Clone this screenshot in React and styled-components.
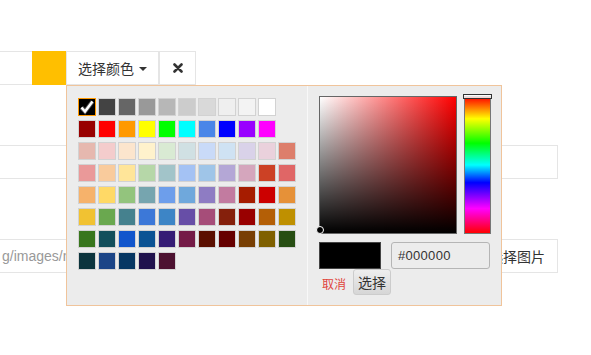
import React from 'react'
import styled, {createGlobalStyle} from 'styled-components'

const GlobalStyle = createGlobalStyle`
  html, body {
    margin: 0;
    padding: 0;
    background: #fff;
    font-family: "Liberation Sans", "Noto Sans CJK SC", sans-serif;
    color: #333;
  }
`

const palette = [
  ['#000000', '#434343', '#666666', '#999999', '#b7b7b7', '#cccccc', '#d9d9d9', '#efefef', '#f3f3f3', '#ffffff'],
  ['#980000', '#ff0000', '#ff9900', '#ffff00', '#00ff00', '#00ffff', '#4a86e8', '#0000ff', '#9900ff', '#ff00ff'],
  ['#e6b8af', '#f4cccc', '#fce5cd', '#fff2cc', '#d9ead3', '#d0e0e3', '#c9daf8', '#cfe2f3', '#d9d2e9', '#ead1dc', '#dd7e6b'],
  ['#ea9999', '#f9cb9c', '#ffe599', '#b6d7a8', '#a2c4c9', '#a4c2f4', '#9fc5e8', '#b4a7d6', '#d5a6bd', '#cc4125', '#e06666'],
  ['#f6b26b', '#ffd966', '#93c47d', '#76a5af', '#6d9eeb', '#6fa8dc', '#8e7cc3', '#c27ba0', '#a61c00', '#cc0000', '#e69138'],
  ['#f1c232', '#6aa84f', '#45818e', '#3c78d8', '#3d85c6', '#674ea7', '#a64d79', '#85200c', '#990000', '#b45f06', '#bf9000'],
  ['#38761d', '#134f5c', '#1155cc', '#0b5394', '#351c75', '#741b47', '#5b0f00', '#660000', '#783f04', '#7f6000', '#274e13'],
  ['#0c343d', '#1c4587', '#073763', '#20124d', '#4c1130'],
]

const Page = styled.div`
  width: 591px;
  height: 355px;
  overflow: hidden;
  padding-top: 51px;
  box-sizing: border-box;
`

const InputGroup = styled.div`
  display: flex;
  height: 34px;
  margin-left: -1px;
  position: relative;
  z-index: 2;
`

const ValueBox = styled.div`
  width: 33px;
  box-sizing: border-box;
  border: 1px solid #e5e5e5;
  border-right: none;
  background: #fff;
`

const ColorChip = styled.div`
  width: 34px;
  background: ${p => p.$color};
`

const Dropdown = styled.div`
  position: relative;
  display: flex;
`

const GroupButton = styled.div`
  display: flex;
  align-items: center;
  justify-content: center;
  box-sizing: border-box;
  height: 34px;
  width: ${p => p.$width}px;
  border: 1px solid #e5e5e5;
  ${p => p.$joined && 'border-left: none;'}
  background: #fff;
  font-size: 14px;
  color: #333;
  gap: 4px;
`

const Caret = styled.span`
  width: 0;
  height: 0;
  border-left: 4px solid transparent;
  border-right: 4px solid transparent;
  border-top: 4px solid #333;
  margin-left: 1px;
  margin-top: 1px;
`

const Popup = styled.div`
  position: absolute;
  top: 100%;
  left: 0;
  display: flex;
  width: 436px;
  height: 221px;
  box-sizing: border-box;
  background: #ececec;
  border: 1px solid #f0c49b;
`

const PaletteBox = styled.div`
  width: 241px;
  box-sizing: border-box;
  padding: 12px 11px 0 11px;
  border-right: 1px solid #f8f8f8;
  display: flex;
  flex-direction: column;
  gap: 4px;
`

const SwatchRow = styled.div`
  display: flex;
  gap: 2px;
`

const Swatch = styled.div`
  width: 18px;
  height: 18px;
  box-sizing: border-box;
  border: 1px solid ${p => (p.$active ? '#f90' : '#d2d2d2')};
  background: ${p => p.$color};
  display: flex;
  align-items: center;
  justify-content: center;
`

const PickerBox = styled.div`
  flex: 1;
  padding: 10px 10px 0 11px;
  display: flex;
  flex-direction: column;
`

const PickerTop = styled.div`
  display: flex;
  gap: 7px;
`

const Saturation = styled.div`
  position: relative;
  width: 138px;
  height: 138px;
  box-sizing: border-box;
  border: 1px solid #666;
  background: linear-gradient(to top, #000, rgba(0, 0, 0, 0)),
    linear-gradient(to right, #fff, #f00);
`

const Dragger = styled.div`
  position: absolute;
  left: -4px;
  bottom: -1px;
  width: 6px;
  height: 6px;
  border-radius: 50%;
  background: #000;
  border: 1px solid #fff;
`

const HueBar = styled.div`
  position: relative;
  width: 27px;
  height: 138px;
  box-sizing: border-box;
  border: 1px solid #777;
  background: linear-gradient(to bottom, #f00 0%, #ff0 16%, #0f0 34%, #0ff 50%, #00f 63%, #f0f 82%, #f00 100%);
`

const HueHandle = styled.div`
  position: absolute;
  top: -3px;
  left: -2px;
  right: -2px;
  height: 5px;
  box-sizing: border-box;
  border: 1px solid #333;
  background: rgba(255, 255, 255, 0.8);
`

const InputRow = styled.div`
  display: flex;
  gap: 10px;
  margin-top: 8px;
`

const Preview = styled.div`
  width: 62px;
  height: 27px;
  box-sizing: border-box;
  border: 1px solid #444;
  background: ${p => p.$color};
`

const HexInput = styled.div`
  width: 99px;
  height: 27px;
  box-sizing: border-box;
  border: 1px solid #b5b5b5;
  border-radius: 3px;
  padding-left: 6px;
  display: flex;
  align-items: center;
  font-size: 13px;
  color: #333;
  letter-spacing: 0.3px;
`

const ButtonRow = styled.div`
  display: flex;
  align-items: center;
  padding-left: 3px;
  gap: 7px;
`

const CancelLink = styled.span`
  font-size: 12px;
  color: #e0443c;
  margin-top: 2px;
`

const ChooseButton = styled.div`
  width: 38px;
  height: 26px;
  box-sizing: border-box;
  border: 1px solid #ccc;
  border-radius: 3px;
  background: linear-gradient(to bottom, #eee, #d6d6d6);
  font-size: 14px;
  color: #333;
  display: flex;
  align-items: center;
  justify-content: center;
`

const FieldRow = styled.div`
  display: flex;
  height: 34px;
  margin-top: 60px;
  margin-left: -1px;
  width: 559px;
`

const TextField = styled.div`
  flex: 1;
  box-sizing: border-box;
  border: 1px solid #e5e5e5;
  display: flex;
  align-items: center;
  padding-left: 2px;
  font-size: 14px;
  color: #999;
  overflow: hidden;
  white-space: nowrap;
`

const AddonButton = styled.div`
  width: 81px;
  box-sizing: border-box;
  border: 1px solid #e5e5e5;
  border-left: none;
  display: flex;
  align-items: center;
  justify-content: center;
  font-size: 14px;
  color: #333;
`

function CheckMark() {
  return (
    <svg width="16" height="16" viewBox="0 0 16 16">
      <polyline points="2.5,8.5 6,12.5 13.5,2.5" fill="none" stroke="#555" strokeWidth="4.2" />
      <polyline points="2.5,8.5 6,12.5 13.5,2.5" fill="none" stroke="#fff" strokeWidth="2.4" />
    </svg>
  )
}

function CloseIcon() {
  return (
    <svg width="10" height="10" viewBox="0 0 10 10">
      <path d="M1.5 1.5 L8.5 8.5 M8.5 1.5 L1.5 8.5" stroke="#333" strokeWidth="2.6" strokeLinecap="round" />
    </svg>
  )
}

function ColorPopup() {
  return (
    <Popup>
      <PaletteBox>
        {palette.map((row, i) => (
          <SwatchRow key={i}>
            {row.map((c, j) => (
              <Swatch key={c} $color={c} $active={i === 0 && j === 0}>
                {i === 0 && j === 0 && <CheckMark />}
              </Swatch>
            ))}
          </SwatchRow>
        ))}
      </PaletteBox>
      <PickerBox>
        <PickerTop>
          <Saturation>
            <Dragger />
          </Saturation>
          <HueBar>
            <HueHandle />
          </HueBar>
        </PickerTop>
        <InputRow>
          <Preview $color="#000" />
          <HexInput>#000000</HexInput>
        </InputRow>
        <ButtonRow>
          <CancelLink>取消</CancelLink>
          <ChooseButton>选择</ChooseButton>
        </ButtonRow>
      </PickerBox>
    </Popup>
  )
}

export default function App() {
  return (
    <Page>
      <GlobalStyle />
      <InputGroup>
        <ValueBox />
        <ColorChip $color="#ffbf00" />
        <Dropdown>
          <GroupButton $width={93}>
            选择颜色
            <Caret />
          </GroupButton>
          <ColorPopup />
        </Dropdown>
        <GroupButton $width={37}>
          <CloseIcon />
        </GroupButton>
      </InputGroup>
      <FieldRow>
        <TextField />
      </FieldRow>
      <FieldRow>
        <TextField>g/images/no-image.png</TextField>
        <AddonButton>选择图片</AddonButton>
      </FieldRow>
    </Page>
  )
}
